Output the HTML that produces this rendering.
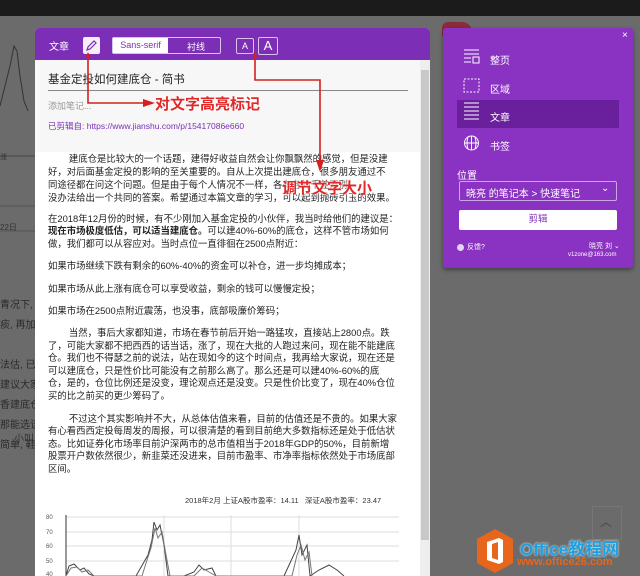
<!DOCTYPE html>
<html><head><meta charset="utf-8"><style>
*{margin:0;padding:0;box-sizing:border-box}
body{width:640px;height:576px;overflow:hidden;background:#6b6b6b;font-family:"Liberation Sans","Noto Sans CJK SC",sans-serif;position:relative}
.a{position:absolute;white-space:nowrap}
.t{font-size:9.4px;color:#222;left:48px;letter-spacing:0}
.rp{color:#fff;font-size:10px}
</style></head><body>
<div class="a" style="left:0;top:0;width:640px;height:16px;background:#1b1b1b"></div>
<svg class="a" style="left:0;top:16px" width="36" height="260"><polyline points="0,90 5,70 10,50 14,30 17,35 20,60 24,85 28,95" fill="none" stroke="#333" stroke-width="1"/><line x1="0" y1="140" x2="36" y2="140" stroke="#444"/><line x1="0" y1="190" x2="36" y2="190" stroke="#555"/><line x1="0" y1="215" x2="36" y2="215" stroke="#555"/></svg>
<div class="a" style="left:0;top:152px;font-size:7px;color:#333">涨</div>
<div class="a" style="left:0;top:222px;font-size:8px;color:#333">22日</div>
<div class="a" style="left:0;top:296px;font-size:10px;color:#2a2a2a;line-height:20px">青况下,<br>痰, 再加<br><br>法估, 已<br>建议大家<br>香建底仓<br>那能选该<br>简单, 鞋</div>
<div class="a" style="left:14px;top:430px;font-size:10px;color:#333">小叫</div>
<div class="a" style="left:35px;top:28px;width:395px;height:548px;background:#fff;border-radius:4px 4px 0 0;overflow:hidden">
 <div class="a" style="left:0;top:0;width:395px;height:32px;background:#7c2fb6"></div>
 <div class="a rp" style="left:14px;top:10px">文章</div>
 <div class="a" style="left:48px;top:9px;width:17px;height:17px;background:#f3eef8;border-radius:2px"><svg width="17" height="17"><path d="M4 13 L5 10 L11 4 L13 6 L7 12 Z" fill="none" stroke="#7c2fb6" stroke-width="1.2"/></svg></div>
 <div class="a" style="left:77px;top:9px;width:109px;height:17px;border:1px solid #d8c4ea;border-radius:2px"></div>
 <div class="a" style="left:78px;top:10px;width:55px;height:15px;background:#fff;font-size:9px;color:#7c2fb6;text-align:center;line-height:15px">Sans-serif</div>
 <div class="a rp" style="left:152px;top:12px;font-size:9px">衬线</div>
 <div class="a" style="left:201px;top:10px;width:18px;height:16px;border:1px solid #d8c4ea;border-radius:2px;color:#fff;font-size:9px;text-align:center;line-height:14px">A</div>
 <div class="a" style="left:223px;top:9px;width:20px;height:18px;border:1px solid #d8c4ea;border-radius:2px;color:#fff;font-size:13px;text-align:center;line-height:16px">A</div>
 <div class="a" style="left:0;top:32px;width:395px;height:92px;background:#f7f7f7"></div>
 <div class="a" style="left:13px;top:43px;font-size:11.5px;color:#222">基金定投如何建底仓 - 简书</div>
 <div class="a" style="left:13px;top:62px;width:360px;height:1px;background:#888"></div>
 <div class="a" style="left:13px;top:71px;font-size:9px;color:#999">添加笔记...</div>
 <div class="a" style="left:13px;top:92px;font-size:8.5px;color:#7c2fb6">已剪辑自: https://www.jianshu.com/p/15417086e660</div>
 <div class="a" style="left:385px;top:32px;width:10px;height:516px;background:#eee"></div>
 <div class="a" style="left:386px;top:42px;width:8px;height:470px;background:#c8c8c8"></div>
</div>
<div class="a t" style="top:151px">&nbsp;&nbsp;&nbsp;&nbsp;&nbsp;&nbsp;&nbsp;&nbsp;建底仓是比较大的一个话题，建得好收益自然会让你飘飘然的感觉，但是没建</div>
<div class="a t" style="top:164px">好，对后面基金定投的影响的至关重要的。自从上次提出建底仓，很多朋友通过不</div>
<div class="a t" style="top:177px">同途径都在问这个问题。但是由于每个人情况不一样，各有各的千差万别，</div>
<div class="a t" style="top:190px">没办法给出一个共同的答案。希望通过本篇文章的学习，可以起到抛砖引玉的效果。</div>
<div class="a t" style="top:211px">在2018年12月份的时候，有不少刚加入基金定投的小伙伴，我当时给他们的建议是：</div>
<div class="a t" style="top:223px"><b>现在市场极度低估，可以适当建底仓。</b>可以建40%-60%的底仓，这样不管市场如何</div>
<div class="a t" style="top:236px">做，我们都可以从容应对。当时点位一直徘徊在2500点附近：</div>
<div class="a t" style="top:258px">如果市场继续下跌有剩余的60%-40%的资金可以补仓，进一步均摊成本；</div>
<div class="a t" style="top:281px">如果市场从此上涨有底仓可以享受收益，剩余的钱可以慢慢定投；</div>
<div class="a t" style="top:303px">如果市场在2500点附近震荡，也没事，底部吸廉价筹码；</div>
<div class="a t" style="top:325px">&nbsp;&nbsp;&nbsp;&nbsp;&nbsp;&nbsp;&nbsp;&nbsp;当然，事后大家都知道，市场在春节前后开始一路猛攻，直接站上2800点。跌</div>
<div class="a t" style="top:338px">了，可能大家都不把西西的话当话，涨了，现在大批的人跑过来问，现在能不能建底</div>
<div class="a t" style="top:350px">仓。我们也不得瑟之前的说法，站在现如今的这个时间点，我再给大家说，现在还是</div>
<div class="a t" style="top:363px">可以建底仓，只是性价比可能没有之前那么高了。那么还是可以建40%-60%的底</div>
<div class="a t" style="top:375px">仓，是的，仓位比例还是没变，理论观点还是没变。只是性价比变了，现在40%仓位</div>
<div class="a t" style="top:388px">买的比之前买的更少筹码了。</div>
<div class="a t" style="top:411px">&nbsp;&nbsp;&nbsp;&nbsp;&nbsp;&nbsp;&nbsp;&nbsp;不过这个其实影响并不大，从总体估值来看，目前的估值还是不贵的。如果大家</div>
<div class="a t" style="top:423px">有心看西西定投每周发的周报，可以很清楚的看到目前绝大多数指标还是处于低估状</div>
<div class="a t" style="top:436px">态。比如证券化市场率目前沪深两市的总市值相当于2018年GDP的50%，目前新增</div>
<div class="a t" style="top:448px">股票开户数依然很少，新韭菜还没进来，目前市盈率、市净率指标依然处于市场底部</div>
<div class="a t" style="top:461px">区间。</div>
<div class="a" style="left:185px;top:495px;font-size:7.5px;color:#333">2018年2月 上证A股市盈率：14.11&nbsp;&nbsp;&nbsp;深证A股市盈率：23.47</div>
<svg class="a" style="left:44px;top:510px" width="360" height="66">
 <g stroke="#ddd" stroke-width="1"><line x1="22" y1="7" x2="355" y2="7"/><line x1="22" y1="22" x2="355" y2="22"/><line x1="22" y1="36" x2="355" y2="36"/><line x1="22" y1="51" x2="355" y2="51"/><line x1="120" y1="5" x2="120" y2="66"/><line x1="187" y1="5" x2="187" y2="66"/><line x1="255" y1="5" x2="255" y2="66"/></g>
 <line x1="22" y1="5" x2="22" y2="66" stroke="#333"/>
 <g font-size="6" fill="#555"><text x="2" y="9">80</text><text x="2" y="24">70</text><text x="2" y="38">60</text><text x="2" y="53">50</text><text x="2" y="66">40</text></g>
 <polyline fill="none" stroke="#444" stroke-width="1" points="22,66 25,56 30,54 36,60 40,58 45,64 50,66 60,66 70,66 80,66 92,66 100,52 104,45 108,30 110,12 113,20 116,15 120,35 124,66 140,66 150,62 155,55 160,60 168,58 172,66 190,66 220,66 240,66 252,40 255,25 258,45 263,35 266,66 275,60 285,55 293,60 300,66"/>
 <polyline fill="none" stroke="#777" stroke-width="1" points="22,66 27,58 33,57 38,62 44,60 50,66 98,66 103,50 107,38 111,18 114,28 118,22 122,45 126,66 150,66 158,58 165,62 172,66 248,66 253,45 257,35 261,50 265,42 268,66"/>
</svg>
<svg class="a" style="left:0;top:0" width="640" height="576">
 <g fill="none" stroke="#d42020" stroke-width="1.6"><polyline points="88,57 88,103 145,103"/><polyline points="255,57 255,80 320,80 320,162"/></g>
 <polygon points="155,103 143,99 143,107" fill="#d42020"/>
 <polygon points="320,172 316,160 324,160" fill="#d42020"/>
 <polygon points="88,52 85,58 91,58" fill="#d42020"/>
 <polygon points="255,52 252,58 258,58" fill="#d42020"/>
</svg>
<div class="a" style="left:155px;top:93px;font-size:15px;color:#e02828;font-weight:bold;text-shadow:0 0 3px #fff,0 0 2px #fff">对文字高亮标记</div>
<div class="a" style="left:282px;top:177px;font-size:15px;color:#e02828;font-weight:bold;text-shadow:0 0 3px #fff,0 0 2px #fff">调节文字大小</div>
<div class="a" style="left:442px;top:22px;width:30px;height:14px;background:#8a2a3a;border-radius:6px 10px 0 0"></div>
<div class="a" style="left:443px;top:28px;width:190px;height:240px;background:#8a32c2;border-radius:3px;box-shadow:0 2px 4px rgba(0,0,0,.4)"></div>
<div class="a rp" style="left:622px;top:30px;font-size:10px">×</div>
<div class="a" style="left:457px;top:100px;width:162px;height:28px;background:#6a1f9c"></div>
<svg class="a" style="left:463px;top:48px" width="20" height="110" stroke="#fff" fill="none" stroke-width="1">
 <path d="M1 2H16M1 6H16M1 10H8M1 14H8M10 9H16V15H10Z"/>
 <path d="M1 31H16V44H1Z" stroke-dasharray="2 1.5"/>
 <path d="M1 55H16M1 59H16M1 63H16M1 67H16M1 71H16"/>
 <circle cx="8.5" cy="95" r="7"/><path d="M1.5 95H15.5M8.5 88V102M5 89Q3 95 5 101M12 89Q14 95 12 101"/>
</svg>
<div class="a rp" style="left:490px;top:52px">整页</div>
<div class="a rp" style="left:490px;top:81px">区域</div>
<div class="a rp" style="left:490px;top:109px">文章</div>
<div class="a rp" style="left:490px;top:138px">书签</div>
<div class="a rp" style="left:457px;top:167px">位置</div>
<div class="a" style="left:459px;top:181px;width:158px;height:20px;border:1px solid #c9a7e3;border-radius:2px"></div>
<div class="a rp" style="left:466px;top:185px;font-size:10px">晓亮 的笔记本 &gt; 快速笔记</div>
<div class="a rp" style="left:601px;top:183px;font-size:10px">⌄</div>
<div class="a" style="left:459px;top:210px;width:158px;height:20px;background:#fff;border-radius:2px;color:#7c2fb6;font-size:9.5px;text-align:center;line-height:20px">剪辑</div>
<div class="a" style="left:457px;top:244px;width:7px;height:7px;border-radius:50%;background:#e6d5f2"></div>
<div class="a rp" style="left:467px;top:242px;font-size:7px">反馈?</div>
<div class="a rp" style="left:589px;top:241px;font-size:7px">晓亮 刘 ⌄</div>
<div class="a rp" style="left:568px;top:252px;font-size:6px">v1zone@163.com</div>
<div class="a" style="left:592px;top:506px;width:30px;height:34px;border:1px solid #777"></div>
<div class="a" style="left:600px;top:513px;color:#444;font-size:12px">︿</div>
<svg class="a" style="left:475px;top:528px" width="40" height="46"><polygon points="20,1 38,11 38,35 20,45 2,35 2,11" fill="#e8661c"/><path d="M12 14L24 10L28 12V34L24 36L12 32Z" fill="#fff"/><path d="M17 16L23 14V32L17 30Z" fill="#e8661c"/></svg>
<div class="a" style="left:520px;top:535px;font-size:17px;font-weight:bold;color:#1ba1e2;text-shadow:0 0 2px #fff">Office教程网</div>
<div class="a" style="left:517px;top:556px;font-size:11px;font-weight:bold;color:#e8661c">www.office26.com</div>
</body></html>
